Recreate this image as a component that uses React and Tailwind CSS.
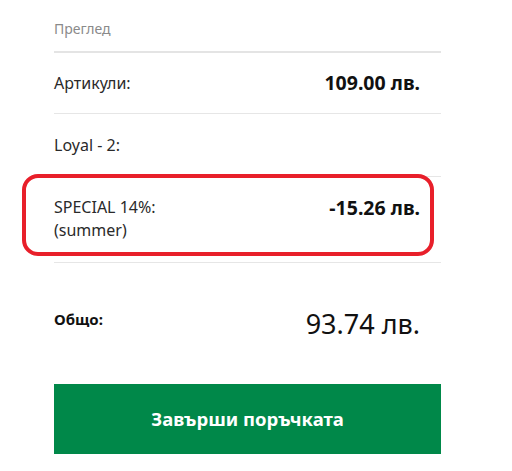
import React from "react";

const font = { fontFamily: '"Noto Sans", Lato, sans-serif' };

export default function App() {
    return (
        <div className="w-[512px] h-[471px] bg-white relative" style={font}>
            <div className="ml-[54px] w-[387px]">
                {/* header */}
                <div className="h-[51px] flex items-center pt-[5px] text-[14px] text-[#8a8a8a]">
                    Преглед
                </div>
                <div className="h-[2px] bg-[#e4e4e4]" />

                {/* rows */}
                <div className="h-[61px] flex items-center justify-between pr-[21px] text-[#2a2a2a] border-b border-[#e6e6e6]">
                    <span className="text-[16px]">Артикули:</span>
                    <span className="text-[19.5px] font-bold text-[#111]">109.00 лв.</span>
                </div>
                <div className="h-[63px] flex items-center justify-between pr-[21px] text-[#2a2a2a] border-b border-[#e6e6e6]">
                    <span className="text-[16px]">Loyal - 2:</span>
                </div>
                <div className="h-[86px] flex items-start justify-between pr-[21px] pt-[19px] text-[#2a2a2a] border-b border-[#e6e6e6]">
                    <div className="text-[16px] leading-[23px]">
                        <div>SPECIAL 14%:</div>
                        <div>(summer)</div>
                    </div>
                    <span className="text-[19.5px] leading-[23px] font-bold text-[#111]">-15.26 лв.</span>
                </div>

                {/* total */}
                <div className="flex items-start justify-between pr-[21px] pt-[44px] h-[121px] text-[#111]">
                    <span className="text-[15px] font-bold leading-[24px]">Общо:</span>
                    <span className="text-[27px] leading-[34px]">93.74 лв.</span>
                </div>

                <button className="w-full h-[70px] bg-[#008849] text-white text-[18.5px] font-bold">
                    Завърши поръчката
                </button>
            </div>

            {/* red annotation */}
            <div className="absolute left-[22px] top-[174px] w-[412px] h-[82px] border-[4px] border-[#e81f2a] rounded-[16px] pointer-events-none" />
        </div>
    );
}
